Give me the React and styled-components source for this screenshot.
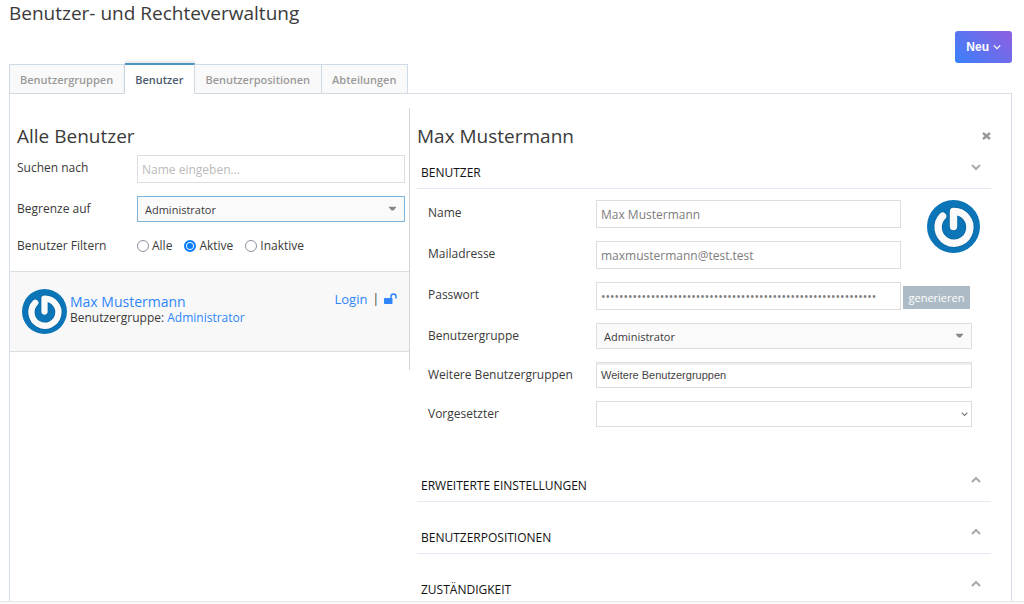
import React, { useState } from "react";
import styled, { createGlobalStyle, css } from "styled-components";

const GlobalStyle = createGlobalStyle`
  *, *::before, *::after {
    box-sizing: border-box;
  }
  body {
    margin: 0;
    background: #fff;
    color: #3a3a3a;
    font-family: "Open Sans", "Noto Sans", sans-serif;
    font-size: 12px;
    font-weight: 500;
    line-height: 26px;
  }
  button, input, select {
    margin: 0;
    font-family: inherit;
    font-size: 12px;
    font-weight: inherit;
  }
`;

const Page = styled.div`
  height: 100vh;
  display: flex;
  flex-direction: column;
  overflow: hidden;
`;

const Main = styled.main`
  flex: 1;
  min-height: 0;
  display: flex;
  flex-direction: column;
  padding: 0 12px 0 9px;
`;

const Footer = styled.footer`
  height: 3px;
  border-top: 1px solid #e9e9e9;
  background: #f8f8f8;
`;

const PageTitle = styled.h1`
  margin: 0;
  font-size: 19px;
  font-weight: 400;
  line-height: 26px;
`;

const Actions = styled.div`
  display: flex;
  justify-content: flex-end;
  padding-top: 5px;
`;

const NewButton = styled.button`
  display: flex;
  align-items: center;
  gap: 4px;
  height: 32px;
  padding: 0 11px;
  border: 0;
  border-radius: 3px;
  background: linear-gradient(45deg, #3a80fb, #8f5fe0);
  color: #fff;
  font-family: "Liberation Sans", Arial, sans-serif;
  font-size: 12px;
  font-weight: 600;
`;

const Tabs = styled.nav`
  display: flex;
  align-items: flex-end;
`;

const Tab = styled.button`
  height: 30px;
  margin-bottom: -1px;
  padding: 0 11px 0 10px;
  border: 1px solid #cfdae4;
  border-left-width: ${props => (props.$first ? "1px" : "0")};
  background: #f9f9f9;
  color: #999;
  font-size: 11px;
  font-weight: 600;
  z-index: 1;
  ${props =>
    props.$active &&
    css`
      height: 31px;
      border-top: 2px solid #4c93c4;
      border-bottom-color: #fff;
      background: #fff;
      color: #4b5b71;
      box-shadow: 0 -2px 3px rgba(0, 0, 0, 0.1);
    `}
`;

const Panel = styled.div`
  flex: 1;
  min-height: 0;
  display: grid;
  grid-template-columns: 400fr 601fr;
  align-items: start;
  padding-top: 14px;
  overflow: hidden;
  border: 1px solid #d5dee7;
  border-bottom: 0;
`;

const UserColumn = styled.section`
  height: 262px;
  padding-top: 16px;
  border-right: 1px solid #d3d6d9;
`;

const DetailColumn = styled.section`
  padding: 16px 20px 0 7px;
`;

const Heading = styled.h2`
  margin: 0;
  font-size: 19px;
  font-weight: 400;
  line-height: 24px;
`;

const Filters = styled.div`
  display: grid;
  grid-template-columns: 120px 1fr;
  row-gap: 13px;
  padding: 7px 4px 12px 7px;
`;

const ListHeading = styled(Heading)`
  padding-left: 7px;
`;

const TextInput = styled.input`
  width: 100%;
  min-width: 0;
  height: 28px;
  padding: 0 4px;
  border: 1px solid #ddd;
  border-radius: 0;
  background: #fff;
  color: #7d7d7d;
  outline: 0;
  &::placeholder {
    color: #bbb;
    opacity: 1;
  }
`;

const GroupsInput = styled(TextInput)`
  grid-column: span 2;
  height: 26px;
  font-family: "Liberation Sans", Arial, sans-serif;
  font-size: 11px;
  box-shadow: inset 0 2px 1px #eee;
  &::placeholder {
    color: #444;
  }
`;

const SelectBox = styled.div`
  position: relative;
  grid-column: ${props => (props.$wide ? "span 2" : "auto")};
  svg {
    position: absolute;
    top: 50%;
    right: ${props => (props.$plain ? "4px" : "8px")};
    transform: translateY(-50%);
    color: #777;
    pointer-events: none;
  }
`;

const Select = styled.select`
  display: block;
  width: 100%;
  height: 26px;
  padding: 0 7px;
  appearance: none;
  border: 1px solid ${props => (props.$focused ? "#7db4dc" : "#ddd")};
  border-radius: 0;
  background: ${props => (props.$plain ? "#fff" : "#fafafa")};
  color: #3a3a3a;
  font-size: 11px;
  outline: 0;
`;

const RadioTitle = styled.span`
  margin-top: -2px;
`;

const RadioGroup = styled.div`
  display: flex;
  gap: 12px;
  margin-top: -2px;
`;

const RadioLabel = styled.label`
  display: flex;
  align-items: center;
  gap: 3px;
`;

const Radio = styled.input`
  appearance: none;
  width: 12px;
  height: 12px;
  border: 1px solid #8f8f9d;
  border-radius: 50%;
  background: #fff;
  &:checked {
    border: 2px solid #0a7cff;
    background: #0a7cff;
    box-shadow: inset 0 0 0 1px #fff;
  }
`;

const UserItem = styled.article`
  display: flex;
  align-items: center;
  height: 81px;
  padding: 0 12px;
  border: 1px solid #dcdfe1;
  border-width: 1px 0;
  background: #f8f8f8;
`;

const UserText = styled.div`
  flex: 1;
  margin-left: 3px;
  padding-bottom: 4px;
  line-height: 15px;
`;

const Link = styled.a`
  color: #2f86fb;
  font-size: ${props => props.$size || 12}px;
  text-decoration: none;
`;

const UserActions = styled.div`
  display: flex;
  align-items: center;
  gap: 5px;
  align-self: flex-start;
  padding-top: 14px;
`;

const IconButton = styled.button`
  display: flex;
  padding: 0;
  border: 0;
  background: none;
  color: ${props => props.$color || "#aaa"};
`;

const DetailHead = styled.header`
  display: flex;
  justify-content: space-between;
  align-items: center;
`;

const SectionHead = styled.header`
  display: flex;
  justify-content: space-between;
  align-items: flex-start;
  margin-top: ${props => props.$space}px;
  padding: 0 10px 2px 4px;
  border-bottom: 1px solid #e2ebf3;
`;

const SectionTitle = styled.h3`
  margin: 0;
  color: #111;
  font-size: 12px;
  font-weight: 500;
  text-transform: uppercase;
`;

const Form = styled.form`
  display: grid;
  grid-template-columns: 168px 1fr 71px;
  row-gap: 13px;
  padding: 11px 19px 0 11px;
`;

const AvatarCell = styled.div`
  grid-column: 3;
  grid-row: 1 / span 2;
  margin-left: 26px;
`;

const GenerateButton = styled.button`
  align-self: center;
  height: 23px;
  margin: 2px 2px 0;
  padding: 0;
  border: 0;
  background: #adbbc6;
  color: #fff;
  font-size: 11px;
  font-weight: 400;
`;

const AvatarSvg = styled.svg`
  display: block;
  flex: none;
`;

const Avatar = ({ size }) => (
  <AvatarSvg width={size} height={size} viewBox="0 0 100 100" aria-hidden="true">
    <circle cx="50" cy="50" r="50" fill="#0b75b8" />
    <path
      d="M50 50V21.500A30 30 0 1 1 29.500 30.500"
      fill="none"
      stroke="#065a92"
      strokeOpacity="0.5"
      strokeWidth="17"
      strokeLinecap="round"
      strokeLinejoin="round"
    />
    <path
      d="M50 50V21.500A30 30 0 1 1 29.500 30.500"
      fill="none"
      stroke="#fafafa"
      strokeWidth="14"
      strokeLinecap="round"
      strokeLinejoin="round"
    />
  </AvatarSvg>
);

const Caret = () => (
  <svg width="9" height="5" viewBox="0 0 9 5">
    <path d="M1 0H8V1L5.500 4H3.500L1 1Z" fill="#888" />
  </svg>
);

const Chevron = ({ up, width = 10, stroke = 2 }) => (
  <svg width={width} height={width + 4} viewBox="0 0 10 14">
    <path
      d={up ? "M1 9L5 5L9 9" : "M1 5L5 9L9 5"}
      fill="none"
      stroke="currentColor"
      strokeWidth={stroke}
    />
  </svg>
);

const CloseIcon = () => (
  <svg width="9" height="8" viewBox="0 0 9 8">
    <path d="M1 1L8 7M8 1L1 7" stroke="#999" strokeWidth="2.400" />
  </svg>
);

const UnlockIcon = () => (
  <svg width="13" height="12" viewBox="0 0 13 12">
    <rect x="0" y="5" width="8.500" height="6" rx="0.800" fill="currentColor" />
    <path
      d="M7 5.500V3.500A2.500 2.500 0 0 1 12 3.500V5.500"
      fill="none"
      stroke="currentColor"
      strokeWidth="1.500"
    />
  </svg>
);

const tabs = ["Benutzergruppen", "Benutzer", "Benutzerpositionen", "Abteilungen"];
const states = ["Alle", "Aktive", "Inaktive"];
const closedSections = [
  { title: "Erweiterte Einstellungen", space: 46 },
  { title: "Benutzerpositionen", space: 23 },
  { title: "Zuständigkeit", space: 23 }
];

const UserList = () => {
  const [state, setState] = useState("Aktive");
  return (
    <UserColumn>
      <ListHeading>Alle Benutzer</ListHeading>
      <Filters>
        <label htmlFor="search">Suchen nach</label>
        <TextInput id="search" placeholder="Name eingeben..." />
        <label htmlFor="limit">Begrenze auf</label>
        <SelectBox>
          <Select id="limit" $focused>
            <option>Administrator</option>
          </Select>
          <Caret />
        </SelectBox>
        <RadioTitle id="filter">Benutzer Filtern</RadioTitle>
        <RadioGroup role="radiogroup" aria-labelledby="filter">
          {states.map(name => (
            <RadioLabel key={name}>
              <Radio
                type="radio"
                name="state"
                checked={state === name}
                onChange={() => setState(name)}
              />
              {name}
            </RadioLabel>
          ))}
        </RadioGroup>
      </Filters>
      <UserItem>
        <Avatar size={45} />
        <UserText>
          <div>
            <Link href="#user" $size={14}>
              Max Mustermann
            </Link>
          </div>
          <div>
            Benutzergruppe: <Link href="#group">Administrator</Link>
          </div>
        </UserText>
        <UserActions>
          <Link href="#login" $size={13}>
            Login
          </Link>
          <span>|</span>
          <IconButton type="button" aria-label="Entsperren" $color="#2f86fb">
            <UnlockIcon />
          </IconButton>
        </UserActions>
      </UserItem>
    </UserColumn>
  );
};

const UserDetail = () => (
  <DetailColumn>
    <DetailHead>
      <Heading>Max Mustermann</Heading>
      <IconButton type="button" aria-label="Schließen">
        <CloseIcon />
      </IconButton>
    </DetailHead>
    <SectionHead $space={12}>
      <SectionTitle>Benutzer</SectionTitle>
      <IconButton type="button" aria-label="Zuklappen">
        <Chevron />
      </IconButton>
    </SectionHead>
    <Form>
      <label htmlFor="name">Name</label>
      <TextInput id="name" defaultValue="Max Mustermann" />
      <AvatarCell>
        <Avatar size={53} />
      </AvatarCell>
      <label htmlFor="mail">Mailadresse</label>
      <TextInput id="mail" defaultValue="maxmustermann@test.test" />
      <label htmlFor="password">Passwort</label>
      <TextInput
        id="password"
        type="password"
        autoComplete="off"
        defaultValue={"x".repeat(61)}
      />
      <GenerateButton type="button">generieren</GenerateButton>
      <label htmlFor="group">Benutzergruppe</label>
      <SelectBox $wide>
        <Select id="group">
          <option>Administrator</option>
        </Select>
        <Caret />
      </SelectBox>
      <label htmlFor="groups">Weitere Benutzergruppen</label>
      <GroupsInput id="groups" placeholder="Weitere Benutzergruppen" />
      <label htmlFor="boss">Vorgesetzter</label>
      <SelectBox $wide $plain>
        <Select id="boss" $plain defaultValue="">
          <option value=""></option>
        </Select>
        <Chevron width={7} stroke={1.5} />
      </SelectBox>
    </Form>
    {closedSections.map(({ title, space }) => (
      <SectionHead key={title} $space={space}>
        <SectionTitle>{title}</SectionTitle>
        <IconButton type="button" aria-label="Aufklappen">
          <Chevron up />
        </IconButton>
      </SectionHead>
    ))}
  </DetailColumn>
);

const App = () => {
  const [active, setActive] = useState("Benutzer");
  return (
    <Page>
      <GlobalStyle />
      <Main>
        <PageTitle>Benutzer- und Rechteverwaltung</PageTitle>
        <Actions>
          <NewButton type="button">
            Neu
            <Chevron width={8} stroke={1.5} />
          </NewButton>
        </Actions>
        <Tabs>
          {tabs.map((name, i) => (
            <Tab
              key={name}
              type="button"
              $first={i === 0}
              $active={name === active}
              onClick={() => setActive(name)}
            >
              {name}
            </Tab>
          ))}
        </Tabs>
        <Panel>
          <UserList />
          <UserDetail />
        </Panel>
      </Main>
      <Footer />
    </Page>
  );
};

export default App;
